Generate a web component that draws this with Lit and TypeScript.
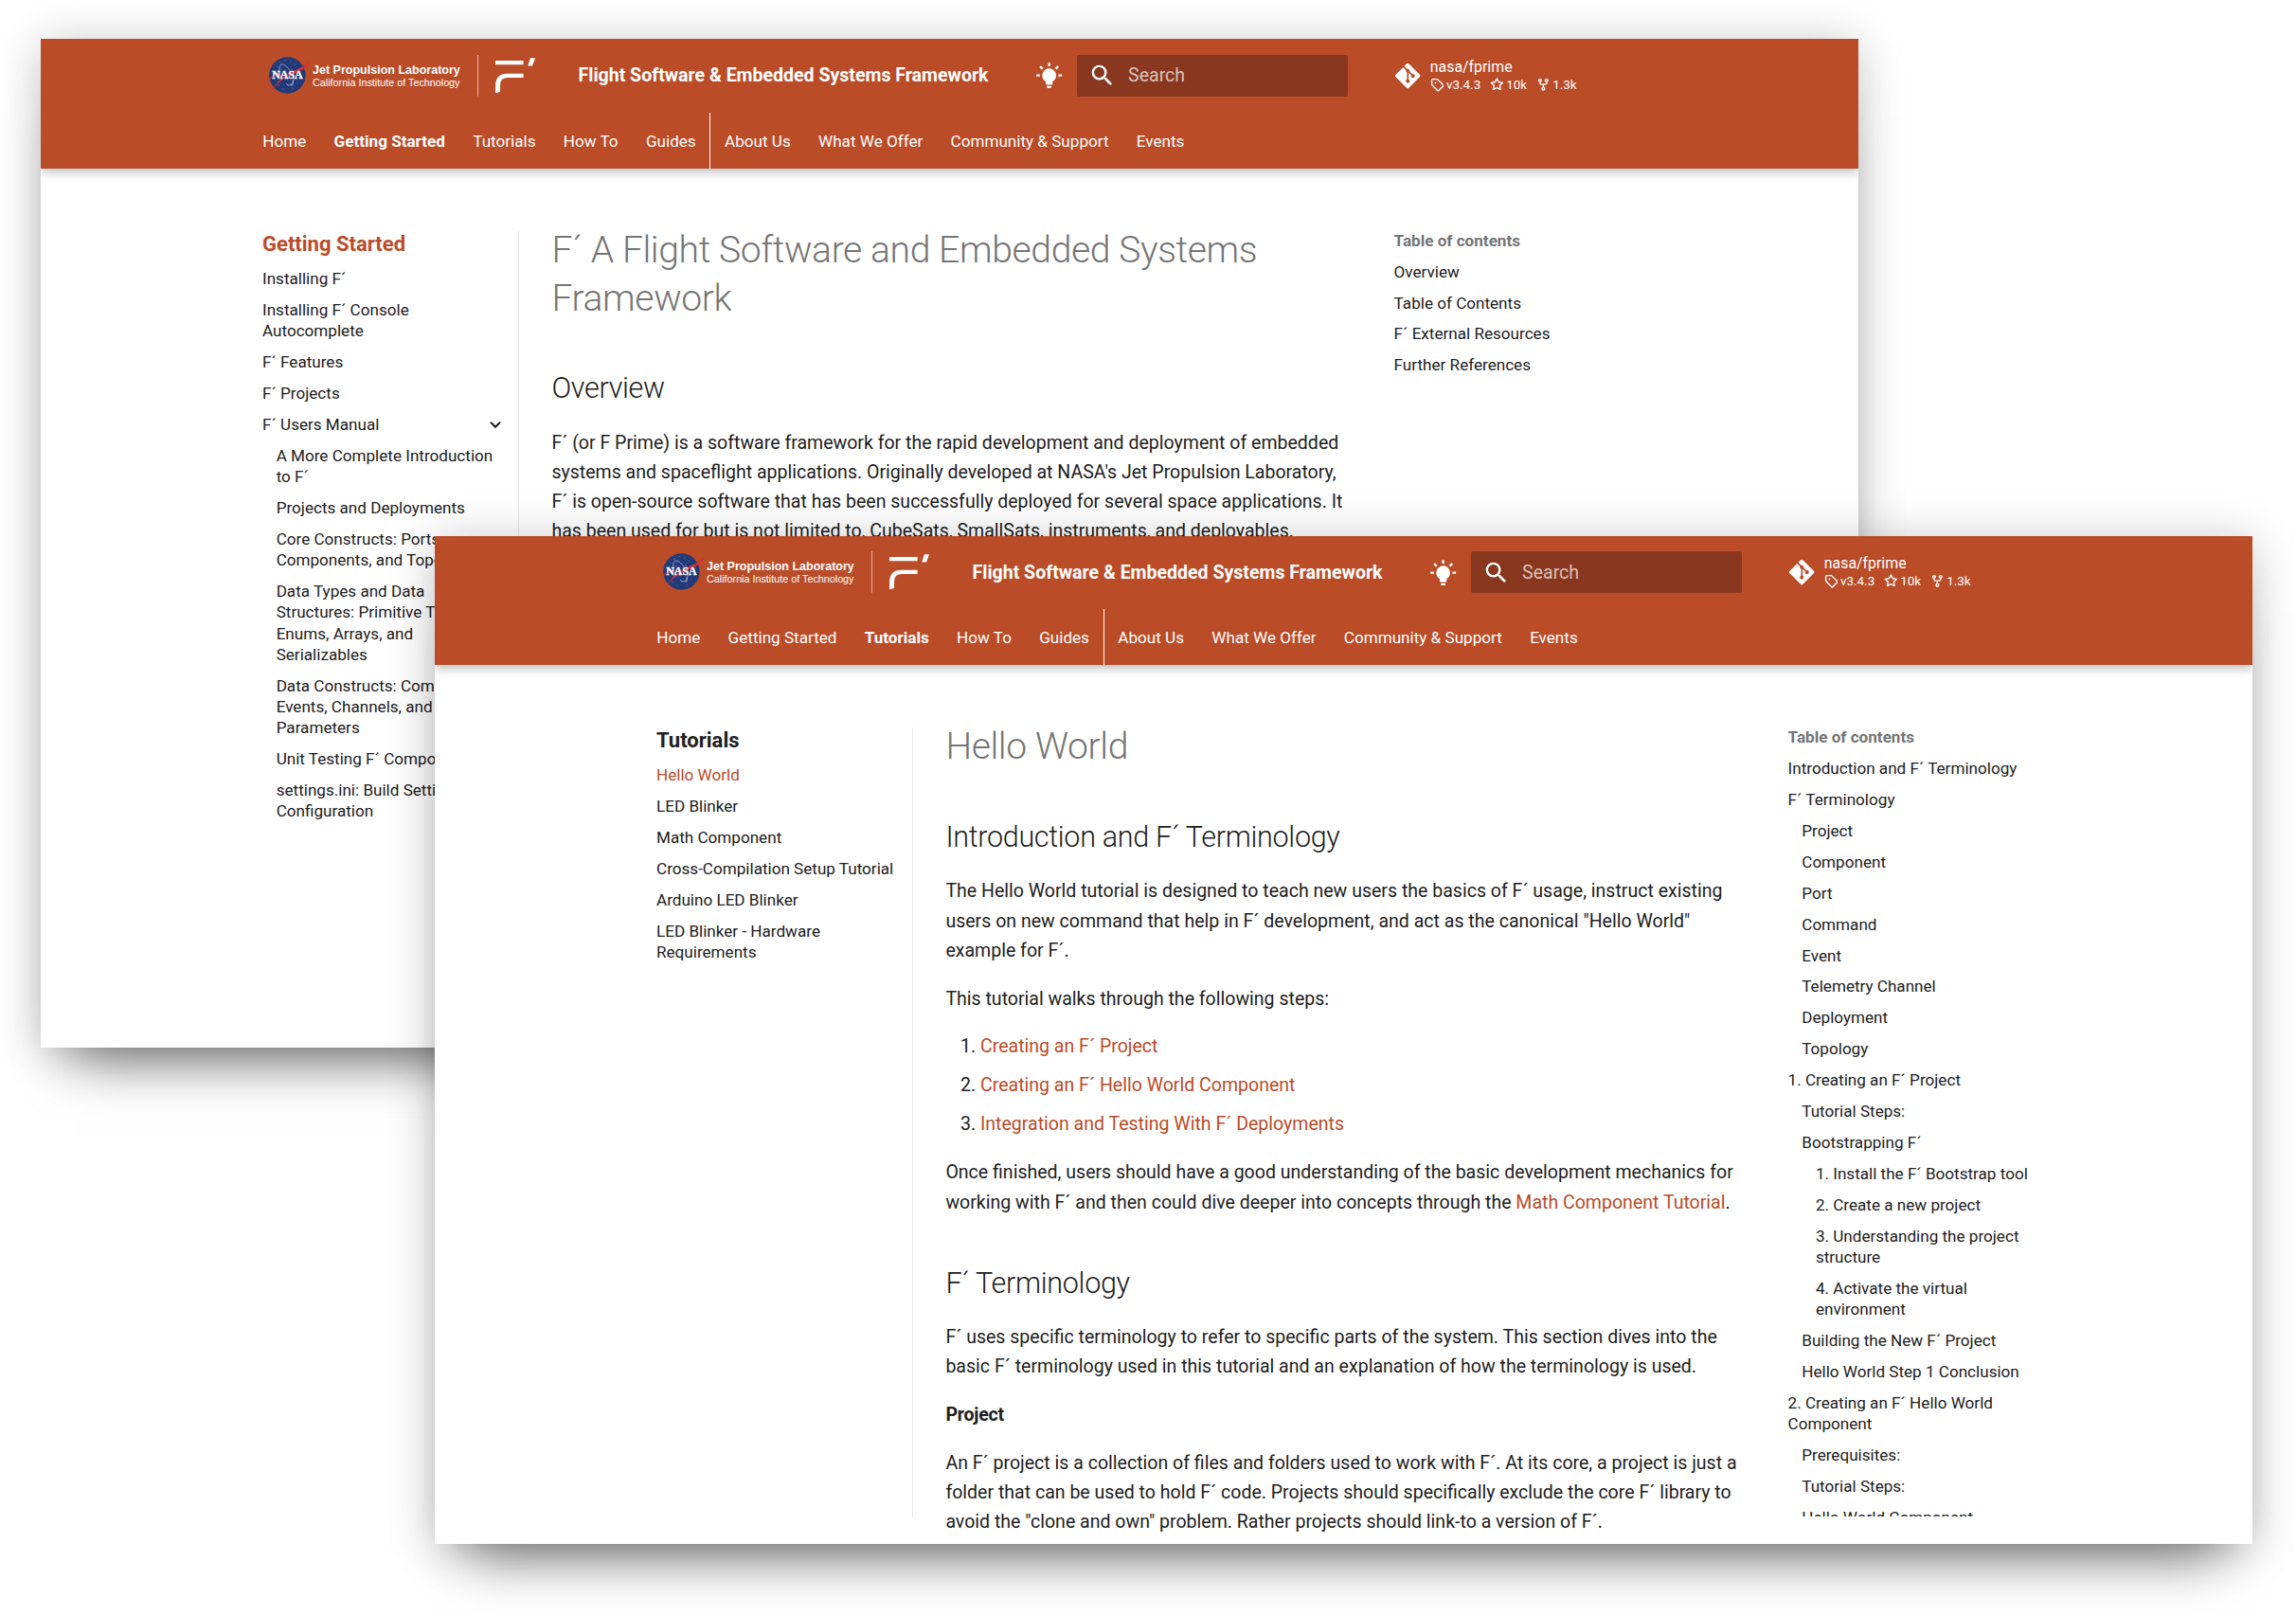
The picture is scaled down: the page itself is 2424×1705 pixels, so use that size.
import { LitElement, html, css, svg, nothing } from "lit";
import { customElement, property } from "lit/decorators.js";

type NavItem = { lines: string[]; level?: number; active?: boolean; open?: boolean };
type Link = { link: string };
type Piece = string | Link;
type Block =
  | { kind: "h1" | "h2" | "h4"; lines: string[] }
  | { kind: "p"; lines: Piece[][] }
  | { kind: "ol"; items: string[] };
type Page = {
  tab: string;
  navTitle: string;
  navTitleActive: boolean;
  nav: NavItem[];
  toc: NavItem[];
  content: Block[];
};

const TABS = ["Home", "Getting Started", "Tutorials", "How To", "Guides", "About Us", "What We Offer", "Community & Support", "Events"];

const item = (text: string, level = 0, extra: Partial<NavItem> = {}): NavItem => ({
  lines: text.split("|"),
  level,
  ...extra,
});

const GETTING_STARTED: Page = {
  tab: "Getting Started",
  navTitle: "Getting Started",
  navTitleActive: true,
  nav: [
    item("Installing F´"),
    item("Installing F´ Console|Autocomplete"),
    item("F´ Features"),
    item("F´ Projects"),
    item("F´ Users Manual", 0, { open: true }),
    item("A More Complete Introduction|to F´", 1),
    item("Projects and Deployments", 1),
    item("Core Constructs: Ports,|Components, and Topologies", 1),
    item("Data Types and Data|Structures: Primitive Types,|Enums, Arrays, and|Serializables", 1),
    item("Data Constructs: Commands,|Events, Channels, and|Parameters", 1),
    item("Unit Testing F´ Components", 1),
    item("settings.ini: Build Settings|Configuration", 1),
  ],
  toc: [item("Overview"), item("Table of Contents"), item("F´ External Resources"), item("Further References")],
  content: [
    { kind: "h1", lines: ["F´ A Flight Software and Embedded Systems", "Framework"] },
    { kind: "h2", lines: ["Overview"] },
    {
      kind: "p",
      lines: [
        ["F´ (or F Prime) is a software framework for the rapid development and deployment of embedded"],
        ["systems and spaceflight applications. Originally developed at NASA's Jet Propulsion Laboratory,"],
        ["F´ is open-source software that has been successfully deployed for several space applications. It"],
        ["has been used for but is not limited to, CubeSats, SmallSats, instruments, and deployables."],
      ],
    },
  ],
};

const TUTORIALS: Page = {
  tab: "Tutorials",
  navTitle: "Tutorials",
  navTitleActive: false,
  nav: [
    item("Hello World", 0, { active: true }),
    item("LED Blinker"),
    item("Math Component"),
    item("Cross-Compilation Setup Tutorial"),
    item("Arduino LED Blinker"),
    item("LED Blinker - Hardware|Requirements"),
  ],
  toc: [
    item("Introduction and F´ Terminology"),
    item("F´ Terminology"),
    item("Project", 1),
    item("Component", 1),
    item("Port", 1),
    item("Command", 1),
    item("Event", 1),
    item("Telemetry Channel", 1),
    item("Deployment", 1),
    item("Topology", 1),
    item("1. Creating an F´ Project"),
    item("Tutorial Steps:", 1),
    item("Bootstrapping F´", 1),
    item("1. Install the F´ Bootstrap tool", 2),
    item("2. Create a new project", 2),
    item("3. Understanding the project|structure", 2),
    item("4. Activate the virtual|environment", 2),
    item("Building the New F´ Project", 1),
    item("Hello World Step 1 Conclusion", 1),
    item("2. Creating an F´ Hello World|Component"),
    item("Prerequisites:", 1),
    item("Tutorial Steps:", 1),
    item("Hello World Component", 1),
  ],
  content: [
    { kind: "h1", lines: ["Hello World"] },
    { kind: "h2", lines: ["Introduction and F´ Terminology"] },
    {
      kind: "p",
      lines: [
        ["The Hello World tutorial is designed to teach new users the basics of F´ usage, instruct existing"],
        ["users on new command that help in F´ development, and act as the canonical \"Hello World\""],
        ["example for F´."],
      ],
    },
    { kind: "p", lines: [["This tutorial walks through the following steps:"]] },
    {
      kind: "ol",
      items: [
        "Creating an F´ Project",
        "Creating an F´ Hello World Component",
        "Integration and Testing With F´ Deployments",
      ],
    },
    {
      kind: "p",
      lines: [
        ["Once finished, users should have a good understanding of the basic development mechanics for"],
        ["working with F´ and then could dive deeper into concepts through the ", { link: "Math Component Tutorial" }, "."],
      ],
    },
    { kind: "h2", lines: ["F´ Terminology"] },
    {
      kind: "p",
      lines: [
        ["F´ uses specific terminology to refer to specific parts of the system. This section dives into the"],
        ["basic F´ terminology used in this tutorial and an explanation of how the terminology is used."],
      ],
    },
    { kind: "h4", lines: ["Project"] },
    {
      kind: "p",
      lines: [
        ["An F´ project is a collection of files and folders used to work with F´. At its core, a project is just a"],
        ["folder that can be used to hold F´ code. Projects should specifically exclude the core F´ library to"],
        ["avoid the \"clone and own\" problem. Rather projects should link-to a version of F´."],
      ],
    },
  ],
};

const broken = (lines: string[]) => lines.map((l, i) => html`${i ? html`<br />` : nothing}${l}`);

const STARS = [
  [292, 70], [296, 66], [301, 63.5], [307, 65], [311, 68], [290, 75], [314, 88],
  [309, 93], [299, 94], [294, 90], [304, 90], [316, 74], [308, 72], [297, 73],
];

const logo = svg`
  <circle cx="303.4" cy="79.5" r="19.2" fill="#233a78"></circle>
  ${STARS.map(([x, y]) => svg`<circle cx=${x} cy=${y} r="0.45" fill="#c9d0e6"></circle>`)}
  <path d="M297 82C293 72 295 67 299 68s11 11 11 16-5 8-8 4M309 85v5h-2" fill="none" stroke="#b9c2dc" stroke-width="0.7"></path>
  <path d="M307 75.500C316 73 323 69 327.800 63.200C325.500 70 319 74.500 311 77.500C302 80.500 293 87 286.500 96.200C291 88 298 81 307 75.500Z" fill="#dd2c33"></path>
  <path d="M284.800 84.500C285.500 80 291 77.800 298 78" fill="none" stroke="#dd2c33" stroke-width="1"></path>
  <text x="287.300" y="82.800" textLength="32.200" lengthAdjust="spacingAndGlyphs" class="nasa">NASA</text>
  <text x="330" y="77.800" textLength="155.800" lengthAdjust="spacingAndGlyphs" class="jpl">Jet Propulsion Laboratory</text>
  <text x="330" y="91.400" textLength="155.500" lengthAdjust="spacingAndGlyphs" class="cit">California Institute of Technology</text>
  <path d="M504.500 58v43.500" stroke="#e3b3a2" stroke-width="1"></path>
  <path d="M523 64h29.600v4.300H523zM552.600 77.700v4.200H536q-8 0-8 8.400V97l-4.900 1.300V90.500q0-12.800 12.500-12.800zM559.900 61.200h5.200l-3.100 8.200h-4.700z" fill="#fff"></path>`;

@customElement("docs-header")
class DocsHeader extends LitElement {
  @property() tab = "";

  static styles = css`
    :host {
      display: block;
      position: relative;
      height: 136.4px;
      background: #ba4c28;
      color: #fff;
      box-shadow: 0 0 4.9px rgba(0, 0, 0, 0.1), 0 4.9px 9.8px rgba(0, 0, 0, 0.2);
    }
    svg { display: block; fill: currentColor; }
    .bar {
      display: grid;
      grid-template-columns: 327.500px 482.500px 44.100px 336.300px auto;
      align-items: center;
      height: 77.400px;
      padding-left: 240px;
      box-sizing: border-box;
      white-space: nowrap;
    }
    .nasa { font: 700 11.500px "Liberation Serif", serif; fill: #fff; stroke: #fff; stroke-width: 0.300; }
    .jpl { font: 700 12.500px "Liberation Sans", sans-serif; fill: #fff; }
    .cit { font: 400 11px "Liberation Sans", sans-serif; fill: #fff; }
    .title { font-size: 19.540px; font-weight: 700; }
    .search {
      display: flex;
      align-items: center;
      gap: 12.500px;
      width: 285.800px;
      height: 44px;
      box-sizing: border-box;
      padding-left: 12.200px;
      border-radius: 2.500px;
      background: #89371e;
      font-size: 19.540px;
      color: rgba(255, 255, 255, 0.7);
    }
    .search svg { color: #fff; }
    .repo { display: flex; align-items: center; gap: 10px; }
    .name { font-size: 15.880px; line-height: 19px; }
    .facts { display: flex; font-size: 13.440px; line-height: 19px; gap: 9.800px; }
    .fact { display: flex; align-items: center; gap: 2.500px; }
    .tabs {
      display: flex;
      height: 59px;
      padding-left: 234.300px;
      font-size: 17.100px;
      line-height: 61px;
      white-space: nowrap;
    }
    .tab { padding-right: 29.300px; }
    .tab.current { font-weight: 700; }
    .tab.split { padding-right: 14.700px; border-right: 1.500px solid #fff; margin-right: 14.700px; }
  `;

  render() {
    return html`
      <div class="bar">
        <svg width="285" height="44" viewBox="283 58 285 44">${logo}</svg>
        <span class="title">Flight Software &amp; Embedded Systems Framework</span>
        <svg width="29.300" height="29.300" viewBox="0 0 24 24">
          <path d="M12 6a6 6 0 0 1 6 6c0 2.220-1.210 4.160-3 5.200V19a1 1 0 0 1-1 1h-4a1 1 0 0 1-1-1v-1.800c-1.790-1.040-3-2.980-3-5.200a6 6 0 0 1 6-6m2 15v1a1 1 0 0 1-1 1h-2a1 1 0 0 1-1-1v-1h4m6-10h3v2h-3v-2M1 11h3v2H1v-2M13 1v3h-2V1h2M4.920 3.500l2.130 2.140-1.420 1.410L3.500 4.930 4.920 3.500m12.030 2.130 2.120-2.130 1.430 1.430-2.130 2.120-1.420-1.420Z"></path>
        </svg>
        <div class="search">
          <svg width="29.300" height="29.300" viewBox="0 0 24 24">
            <path d="M9.500 3A6.500 6.500 0 0 1 16 9.500c0 1.610-.59 3.090-1.560 4.230l.27.270h.79l5 5-1.500 1.500-5-5v-.79l-.27-.27A6.516 6.516 0 0 1 9.500 16 6.500 6.500 0 0 1 3 9.500 6.500 6.500 0 0 1 9.500 3m0 2C7 5 5 7 5 9.500S7 14 9.500 14 14 12 14 9.500 12 5 9.500 5Z"></path>
          </svg>
          <span>Search</span>
        </div>
        <div class="repo">
          <svg width="26.400" height="30" viewBox="0 0 448 512">
            <path d="M439.550 236.050 244 40.450a28.870 28.870 0 0 0-40.810 0l-40.660 40.630 51.520 51.520c27.060-9.140 52.680 16.770 43.390 43.680l49.660 49.660c34.230-11.800 61.180 31 35.470 56.690-26.490 26.490-70.210-2.870-56-37.340L240.220 199v121.850c25.300 12.540 22.260 41.850 9.080 55a34.340 34.340 0 0 1-48.550 0c-17.570-17.600-11.070-46.910 11.250-56v-123c-20.800-8.510-24.600-30.740-18.640-45L142.570 101 8.450 235.140a28.860 28.860 0 0 0 0 40.810l195.610 195.600a28.860 28.860 0 0 0 40.800 0l194.690-194.690a28.860 28.860 0 0 0 0-40.810z"></path>
          </svg>
          <div>
            <div class="name">nasa/fprime</div>
            <div class="facts">
              <span class="fact">
                <svg width="14.700" height="14.700" viewBox="0 0 16 16"><path d="M1 7.775V2.750C1 1.784 1.784 1 2.750 1h5.025c.464 0 .91.184 1.238.513l6.250 6.250a1.750 1.750 0 0 1 0 2.474l-5.026 5.026a1.750 1.750 0 0 1-2.474 0l-6.250-6.250A1.752 1.752 0 0 1 1 7.775Zm1.500 0c0 .066.026.13.073.177l6.250 6.250a.25.25 0 0 0 .354 0l5.025-5.025a.25.25 0 0 0 0-.354l-6.250-6.250a.25.25 0 0 0-.177-.073H2.750a.25.25 0 0 0-.25.25ZM6 5a1 1 0 1 1 0 2 1 1 0 0 1 0-2Z"></path></svg>v3.4.3</span>
              <span class="fact">
                <svg width="14.700" height="14.700" viewBox="0 0 16 16"><path d="M8 .25a.75.75 0 0 1 .673.418l1.882 3.815 4.210.612a.75.75 0 0 1 .416 1.279l-3.046 2.970.719 4.192a.751.751 0 0 1-1.088.791L8 12.347l-3.766 1.980a.75.75 0 0 1-1.088-.79l.72-4.194L.818 6.374a.75.75 0 0 1 .416-1.280l4.210-.611L7.327.668A.75.75 0 0 1 8 .25Zm0 2.445L6.615 5.500a.75.75 0 0 1-.564.41l-3.097.45 2.240 2.184a.75.75 0 0 1 .216.664l-.528 3.084 2.769-1.456a.75.75 0 0 1 .698 0l2.770 1.456-.53-3.084a.75.75 0 0 1 .216-.664l2.240-2.183-3.096-.45a.75.75 0 0 1-.564-.41L8 2.694Z"></path></svg>10k</span>
              <span class="fact">
                <svg width="14.700" height="14.700" viewBox="0 0 16 16"><path d="M5 5.372v.878c0 .414.336.75.75.75h4.500a.75.75 0 0 0 .75-.75v-.878a2.250 2.250 0 1 1 1.500 0v.878a2.250 2.250 0 0 1-2.250 2.250h-1.500v2.128a2.251 2.251 0 1 1-1.500 0V8.500h-1.500A2.250 2.250 0 0 1 3.500 6.250v-.878a2.250 2.250 0 1 1 1.500 0ZM5 3.250a.75.75 0 1 0-1.500 0 .75.75 0 0 0 1.500 0Zm6.750.75a.75.75 0 1 0 0-1.500.75.75 0 0 0 0 1.500Zm-3 8.750a.75.75 0 1 0-1.500 0 .75.75 0 0 0 1.500 0Z"></path></svg>1.3k</span>
            </div>
          </div>
        </div>
      </div>
      <div class="tabs">
        ${TABS.map((t) => html`<span class="tab ${t === this.tab ? "current" : ""} ${t === "Guides" ? "split" : ""}">${t}</span>`)}
      </div>
    `;
  }
}

@customElement("docs-window")
class DocsWindow extends LitElement {
  @property({ attribute: false }) page!: Page;

  static styles = css`
    :host {
      display: block;
      width: 1919px;
      height: 1064.400px;
      background: #fff;
      color: #212121;
      box-shadow: 0 5px 46px rgba(0, 0, 0, 0.24), 0 46px 56px -35px rgba(0, 0, 0, 0.5);
    }
    .frame { height: 100%; overflow: hidden; }
    .columns {
      display: grid;
      grid-template-columns: 505px 923.600px auto;
      height: 928px;
      white-space: nowrap;
    }
    .side, .toc {
      height: 834.400px;
      overflow: hidden;
      box-sizing: border-box;
      font-size: 17.100px;
      line-height: 22.230px;
    }
    .side { margin-top: 66.100px; padding-left: 234px; border-right: 1px solid #e8e8e8; }
    .toc { margin-top: 65.100px; }
    .side-title { font-size: 22px; line-height: 28.600px; font-weight: 700; }
    .accent, .link { color: #ba4c28; }
    .toc-title { font-weight: 700; color: #757575; }
    .item { display: flex; justify-content: space-between; padding-right: 13.500px; margin-top: 10.690px; }
    .level1 { padding-left: 14.660px; }
    .level2 { padding-left: 29.300px; }
    .chevron { display: block; fill: none; stroke: #212121; stroke-width: 2; }
    .content { padding: 61.300px 0 0 34.400px; font-size: 19.540px; line-height: 31.270px; }
    h1, h2, h4, p, ol { margin: 0; }
    h1 { font-size: 39.090px; line-height: 50.820px; font-weight: 300; letter-spacing: -0.010em; color: #757575; margin-bottom: 48.900px; }
    h2 { font-size: 30.540px; line-height: 42.750px; font-weight: 300; letter-spacing: -0.010em; margin: 48.900px 0 19.540px; }
    h4 { font-size: 19.540px; font-weight: 700; letter-spacing: -0.010em; margin: 19.540px 0; }
    p { margin: 19.540px 0; }
    ol { margin: 19.540px 0 19.540px 12.200px; padding: 0; }
    li { margin: 0 0 9.770px 24.430px; }
    li:last-child { margin-bottom: 0; }
  `;

  private items(list: NavItem[]) {
    return list.map(
      (n) => html`<div class="item level${n.level ?? 0} ${n.active ? "accent" : ""}">
        <span>${broken(n.lines)}</span>
        ${n.open ? html`<svg class="chevron" width="22" height="22" viewBox="0 0 22 22"><path d="M6 8.800 11 13.800l5-5"></path></svg>` : nothing}
      </div>`
    );
  }

  private block(b: Block) {
    switch (b.kind) {
      case "h1":
        return html`<h1>${broken(b.lines)}</h1>`;
      case "h2":
        return html`<h2>${broken(b.lines)}</h2>`;
      case "h4":
        return html`<h4>${broken(b.lines)}</h4>`;
      case "ol":
        return html`<ol>${b.items.map((t) => html`<li><span class="link">${t}</span></li>`)}</ol>`;
      case "p":
        return html`<p>${b.lines.map(
          (line, i) =>
            html`${i ? html`<br />` : nothing}${line.map((s) => (typeof s === "string" ? s : html`<span class="link">${s.link}</span>`))}`
        )}</p>`;
    }
  }

  render() {
    const p = this.page;
    return html`
      <div class="frame">
        <docs-header .tab=${p.tab}></docs-header>
        <div class="columns">
          <div class="side">
            <div class="side-title ${p.navTitleActive ? "accent" : ""}">${p.navTitle}</div>
            ${this.items(p.nav)}
          </div>
          <div class="content">${p.content.map((b) => this.block(b))}</div>
          <div class="toc">
            <div class="toc-title">Table of contents</div>
            ${this.items(p.toc)}
          </div>
        </div>
      </div>
    `;
  }
}

@customElement("app-root")
class AppRoot extends LitElement {
  static styles = css`
    :host {
      display: block;
      position: relative;
      width: 2424px;
      height: 1705px;
      overflow: hidden;
      background: #fff;
      font-family: Roboto, sans-serif;
    }
    docs-window { position: absolute; }
    .back { left: 43px; top: 41.200px; }
    .front { left: 459px; top: 565.600px; }
  `;

  render() {
    return html`
      <docs-window class="back" .page=${GETTING_STARTED}></docs-window>
      <docs-window class="front" .page=${TUTORIALS}></docs-window>
    `;
  }
}
